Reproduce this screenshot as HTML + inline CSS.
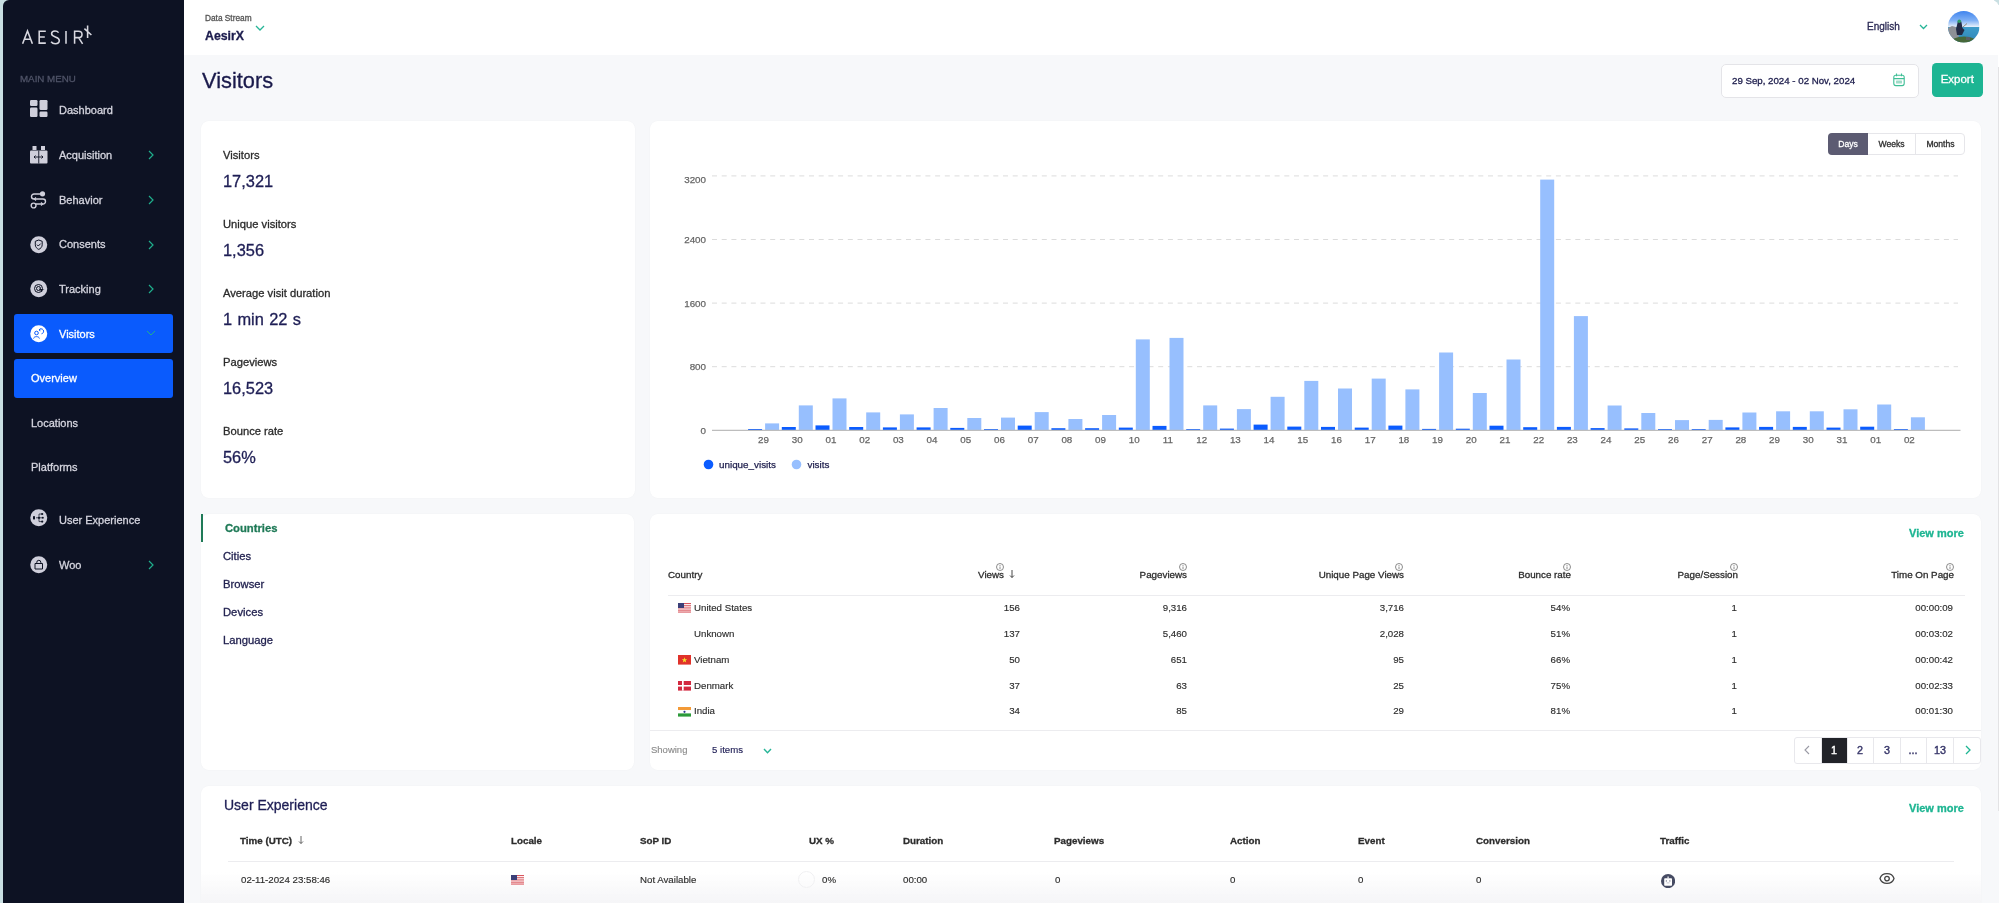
<!DOCTYPE html>
<html><head><meta charset="utf-8">
<style>
*{margin:0;padding:0;box-sizing:border-box}
html,body{width:1999px;height:903px;overflow:hidden;background:#c9dfe2;font-family:"Liberation Sans",sans-serif;}
.a{position:absolute;white-space:nowrap}
body>*{will-change:transform}
div.a,.nav,.lbl,.val,.th,.td,.tab,.uth,.utd,.pg{-webkit-text-stroke:0.3px currentColor}
.td,.utd{-webkit-text-stroke:0.15px currentColor}
svg text{stroke:#666;stroke-width:0.25px}
#side{position:absolute;left:3px;top:0;width:181px;height:903px;background:#0d1223;border-top-left-radius:6px}
#main{position:absolute;left:184px;top:0;width:1815px;height:903px;background:#f7f8fa}
#hdr{position:absolute;left:184px;top:0;width:1815px;height:55px;background:#fff}
.card{position:absolute;background:#fff;border-radius:8px;box-shadow:0 0 1.5px rgba(0,0,0,0.05)}
.nav{position:absolute;left:58.5px;font-size:11px;color:#d5d5df;line-height:14px}
.ico{position:absolute;left:30px;width:17.5px;height:17.5px;border-radius:50%;background:#cfcfdb}
.chev{position:absolute;left:148px;width:6px;height:10px}
.lbl{position:absolute;left:223px;font-size:11.2px;color:#2b2b2b;line-height:14px}
.val{position:absolute;left:223px;font-size:16.4px;word-spacing:0.8px;margin-top:0.3px;color:#1e1e55;line-height:20px}
.yl{font-size:9.8px;fill:#666}
.xl{font-size:9.8px;fill:#666}
.th{position:absolute;font-size:9.8px;color:#2d2d2d;line-height:12px}
.td{position:absolute;font-size:9.7px;color:#2d2d2d;line-height:12px}
.r{text-align:right}
.tab{position:absolute;left:223px;font-size:11.25px;color:#222250;line-height:14px}
.uth{position:absolute;font-size:9.8px;font-weight:bold;color:#2d2d2d;line-height:12px}
.utd{position:absolute;font-size:9.7px;color:#2d2d2d;line-height:12px}
.pg{position:absolute;top:737px;height:26.5px;width:26px;border:1px solid #e6e6ea;background:#fff;font-size:11px;color:#2b2a6e;text-align:center;line-height:25px}
</style></head>
<body>
<div id="side"></div>
<div id="main"></div>
<div id="hdr"></div>

<!-- logo -->
<svg class="a" style="left:0;top:0" width="100" height="50" viewBox="0 0 100 50"><g stroke="#d8d8e0" stroke-width="1.55" fill="none" stroke-linecap="butt">
<path d="M22.6 43.8 L27.5 31 L32.4 43.8 M24.3 39.3 H30.7"/>
<path d="M45.8 31.2 H39.2 V43.1 H45.8 M39.2 37 H44.8"/>
<path d="M58.6 32.6 C57.6 31.3 56.3 30.9 55 30.9 C53 30.9 51.6 32 51.6 33.8 C51.6 37.6 59.3 36.3 59.3 40.5 C59.3 42.6 57.5 43.7 55.3 43.7 C53.5 43.7 52 43 51.1 41.7"/>
<path d="M66 30.9 V43.8"/>
<path d="M74.6 43.8 V31.2 H78.4 C80.6 31.2 82 32.4 82 34.4 C82 36.4 80.6 37.6 78.4 37.6 H74.6 M78.6 37.6 L82.6 43.8"/>
<path d="M87.6 25.6 V38 M84.4 28.6 L91.4 35"/>
</g></svg>
<div class="a" style="left:19.5px;top:72.5px;font-size:9.75px;color:#4f5367;line-height:12px">MAIN MENU</div>

<!-- Dashboard -->
<svg class="a" style="left:30px;top:100px" width="18" height="17" viewBox="0 0 18 17"><rect x="0" y="0" width="7.5" height="6" rx="1.2" fill="#cfcfdb"/><rect x="0" y="7.5" width="7.5" height="9.5" rx="1.2" fill="#cfcfdb"/><rect x="9.5" y="0" width="8" height="10" rx="1.2" fill="#cfcfdb"/><rect x="9.5" y="11.5" width="8" height="5.5" rx="1.2" fill="#cfcfdb"/></svg>
<div class="nav" style="top:102.5px">Dashboard</div>

<!-- Acquisition -->
<svg class="a" style="left:30px;top:146px" width="18" height="18" viewBox="0 0 18 18"><rect x="2.5" y="0" width="4" height="4" fill="#cfcfdb"/><rect x="11" y="0" width="4" height="4" fill="#cfcfdb"/><rect x="0" y="4.5" width="17.5" height="13" rx="1" fill="#cfcfdb"/><path d="M4 11 h9 M5.5 9.5 l-1.5 1.5 l1.5 1.5 M11.5 9.5 l1.5 1.5 l-1.5 1.5 M8.75 4.5 v13" stroke="#0d1223" stroke-width="0.9" fill="none"/></svg>
<div class="nav" style="top:147.5px">Acquisition</div>
<svg class="chev" style="top:150px" viewBox="0 0 6 10"><path d="M1 1 L5 5 L1 9" stroke="#1fae8c" stroke-width="1.2" fill="none"/></svg>

<!-- Behavior -->
<svg class="a" style="left:30px;top:191px" width="18" height="18" viewBox="0 0 18 18"><circle cx="12.5" cy="2.8" r="2.6" fill="#cfcfdb"/><path d="M10 3 H4 a2.5 2.5 0 0 0 0 5 H13 a2.5 2.5 0 0 1 0 5 H6" stroke="#cfcfdb" stroke-width="1.4" fill="none"/><circle cx="3.6" cy="14.5" r="2.4" stroke="#cfcfdb" stroke-width="1.4" fill="none"/><path d="M6 6.5 l-1.6 1.5 l1.6 1.5 M11 11.5 l1.6 1.5 l-1.6 1.5" stroke="#cfcfdb" stroke-width="1.1" fill="none"/></svg>
<div class="nav" style="top:192.5px">Behavior</div>
<svg class="chev" style="top:195px" viewBox="0 0 6 10"><path d="M1 1 L5 5 L1 9" stroke="#1fae8c" stroke-width="1.2" fill="none"/></svg>

<!-- Consents -->
<svg class="a" style="left:30px;top:235.5px" width="18" height="18" viewBox="0 0 18 18"><circle cx="8.75" cy="8.75" r="8.5" fill="#cfcfdb"/><path d="M8.75 4 L12.2 5.3 V8.8 C12.2 11 10.6 12.6 8.75 13.4 C6.9 12.6 5.3 11 5.3 8.8 V5.3 Z" stroke="#0d1223" stroke-width="1" fill="none"/><path d="M7 8.7 l1.3 1.3 l2.4 -2.4" stroke="#0d1223" stroke-width="1" fill="none"/></svg>
<div class="nav" style="top:237px">Consents</div>
<svg class="chev" style="top:239.5px" viewBox="0 0 6 10"><path d="M1 1 L5 5 L1 9" stroke="#1fae8c" stroke-width="1.2" fill="none"/></svg>

<!-- Tracking -->
<svg class="a" style="left:30px;top:280px" width="18" height="18" viewBox="0 0 18 18"><circle cx="8.75" cy="8.75" r="8.5" fill="#cfcfdb"/><circle cx="8.5" cy="8.5" r="4" stroke="#0d1223" stroke-width="1" fill="none"/><circle cx="8.5" cy="8.5" r="2" stroke="#0d1223" stroke-width="1" fill="none"/><path d="M8.5 8.5 l3.5 3.5 l0.5 -2 l2 -0.5 z" fill="#0d1223"/></svg>
<div class="nav" style="top:281.5px">Tracking</div>
<svg class="chev" style="top:284px" viewBox="0 0 6 10"><path d="M1 1 L5 5 L1 9" stroke="#1fae8c" stroke-width="1.2" fill="none"/></svg>

<!-- Visitors active -->
<div class="a" style="left:14px;top:314px;width:159px;height:39px;background:#0a5bfd;border-radius:3px"></div>
<svg class="a" style="left:30px;top:324.5px" width="18" height="18" viewBox="0 0 18 18"><circle cx="8.75" cy="8.75" r="8.5" fill="#ffffff"/><circle cx="6.5" cy="8" r="1.8" stroke="#0a5bfd" stroke-width="1" fill="none"/><path d="M3.6 13.5 C3.8 11 9.2 11 9.4 13.5" stroke="#0a5bfd" stroke-width="1" fill="none"/><path d="M9 5 a2.5 2.5 0 1 1 2.5 3.8 M10.2 3.8 l-1.2 1.2 l1.4 0.8" stroke="#0a5bfd" stroke-width="1" fill="none"/></svg>
<div class="nav" style="top:326.5px;color:#fff">Visitors</div>
<svg class="a" style="left:146px;top:330px" width="10" height="6" viewBox="0 0 10 6"><path d="M1 1 L5 5 L9 1" stroke="#1fae8c" stroke-width="1" fill="none"/></svg>

<div class="a" style="left:14px;top:359px;width:159px;height:39px;background:#0a5bfd;border-radius:3px"></div>
<div class="nav" style="left:30.5px;top:371px;color:#fff">Overview</div>
<div class="nav" style="left:30.5px;top:415.5px">Locations</div>
<div class="nav" style="left:30.5px;top:460px">Platforms</div>

<!-- User Experience -->
<svg class="a" style="left:30px;top:509px" width="18" height="18" viewBox="0 0 18 18"><circle cx="8.75" cy="8.75" r="8.5" fill="#cfcfdb"/><rect x="3" y="7.2" width="2" height="3.2" fill="#0d1223"/><circle cx="9" cy="8.8" r="1.1" fill="#0d1223"/><circle cx="12.2" cy="5" r="1.1" fill="#0d1223"/><circle cx="12.2" cy="12.6" r="1.1" fill="#0d1223"/><circle cx="12.8" cy="8.8" r="1" fill="#0d1223"/><path d="M6 8.8 h6 M9 5 h3 M9 5 v7.6 h3" stroke="#0d1223" stroke-width="0.7" fill="none"/></svg>
<div class="nav" style="top:512.5px">User Experience</div>

<!-- Woo -->
<svg class="a" style="left:30px;top:555.5px" width="18" height="18" viewBox="0 0 18 18"><circle cx="8.75" cy="8.75" r="8.5" fill="#cfcfdb"/><path d="M5 7.5 h7.5 v5.5 h-7.5 z" stroke="#0d1223" stroke-width="1" fill="none"/><path d="M6.8 7.5 v-1.2 a2 2 0 0 1 4 0 v1.2" stroke="#0d1223" stroke-width="1" fill="none"/></svg>
<div class="nav" style="top:557.5px">Woo</div>
<svg class="chev" style="top:559.5px" viewBox="0 0 6 10"><path d="M1 1 L5 5 L1 9" stroke="#1fae8c" stroke-width="1.2" fill="none"/></svg>

<!-- header -->
<div class="a" style="left:1994px;top:0;width:5px;height:5px;background:#c9dfe2"></div><div class="a" style="left:1989px;top:0;width:10px;height:10px;background:#fff;border-top-right-radius:8px;z-index:1"></div>
<div class="a" style="left:204.5px;top:12.5px;font-size:8.3px;color:#555;line-height:10px">Data Stream</div>
<div class="a" style="left:204.5px;top:29px;font-size:12.3px;font-weight:bold;color:#1c1c4e;line-height:14px">AesirX</div>
<svg class="a" style="left:255px;top:25px" width="10" height="7" viewBox="0 0 10 7"><path d="M1 1 L5 5 L9 1" stroke="#26b597" stroke-width="1.3" fill="none"/></svg>

<div class="a" style="left:1866.5px;top:21px;font-size:10px;color:#2b2a55;line-height:12px">English</div>
<svg class="a" style="left:1919px;top:23.5px" width="9" height="6" viewBox="0 0 9 6"><path d="M1 1 L4.5 4.5 L8 1" stroke="#26b597" stroke-width="1.3" fill="none"/></svg>
<svg class="a" style="left:1948px;top:11px" width="31.5" height="31.5" viewBox="0 0 31.5 31.5"><defs><clipPath id="av"><circle cx="15.75" cy="15.75" r="15.75"/></clipPath><linearGradient id="sky" x1="0" y1="0" x2="0" y2="1"><stop offset="0" stop-color="#3f84ee"/><stop offset="0.3" stop-color="#7fb0f5"/><stop offset="0.5" stop-color="#e6f0fb"/><stop offset="0.52" stop-color="#3d9bc9"/><stop offset="1" stop-color="#2f86b8"/></linearGradient></defs>
<g clip-path="url(#av)"><rect width="31.5" height="31.5" fill="url(#sky)"/>
<path d="M0 17 L4 15 L8 16 L10 21 L11 27 L6 31.5 L0 31.5 Z" fill="#8d9096"/>
<ellipse cx="16" cy="32" rx="14" ry="6.5" fill="#46683a"/>
<path d="M9.5 12 C9.5 9.5 13 9 13.5 11.5 L14.5 17 L16.5 19 L14 24 L9 24 L8 18 Z" fill="#232a45"/>
<circle cx="11.3" cy="10.2" r="1.8" fill="#2f9e6a"/>
<path d="M15 16 L19 12.5" stroke="#8a8070" stroke-width="0.9"/>
<rect x="18" y="26" width="4" height="3" fill="#5a5f66"/>
</g></svg>

<div class="a" style="left:201.5px;top:67.5px;font-size:21.8px;color:#1a1a4b;line-height:26px">Visitors</div>

<div class="a" style="left:1720.5px;top:63.5px;width:198px;height:33.5px;background:#fff;border:1px solid #e4e4e8;border-radius:5px"></div>
<div class="a" style="left:1731.5px;top:74.5px;font-size:9.7px;color:#222250;line-height:12px">29 Sep, 2024 - 02 Nov, 2024</div>
<svg class="a" style="left:1893px;top:72.5px" width="12" height="14" viewBox="0 0 12 14"><rect x="0.8" y="2.2" width="10.4" height="10.4" rx="2" stroke="#3fbf96" stroke-width="1.1" fill="none"/><path d="M0.8 5.6 h10.4 M3.5 0.6 v2.6 M8.5 0.6 v2.6" stroke="#3fbf96" stroke-width="1.1"/><rect x="3" y="7.5" width="6" height="3" rx="0.5" fill="#9fdcc8"/></svg>
<div class="a" style="left:1931.5px;top:63px;width:50.5px;height:33.8px;background:#1db593;border-radius:4.5px;color:#fff;font-size:11.5px;text-align:center;line-height:33.5px">Export</div>

<!-- stats card -->
<div class="card" style="left:201px;top:121px;width:434px;height:377px"></div>
<div class="lbl" style="top:148px">Visitors</div>
<div class="val" style="top:170.5px">17,321</div>
<div class="lbl" style="top:217px">Unique visitors</div>
<div class="val" style="top:239.5px">1,356</div>
<div class="lbl" style="top:286px">Average visit duration</div>
<div class="val" style="top:308.5px">1 min 22 s</div>
<div class="lbl" style="top:355px">Pageviews</div>
<div class="val" style="top:377.5px">16,523</div>
<div class="lbl" style="top:424px">Bounce rate</div>
<div class="val" style="top:446.5px">56%</div>

<!-- chart card -->
<div class="card" style="left:650px;top:121px;width:1331px;height:377px"></div>
<div class="a" style="left:1828px;top:133px;width:136.5px;height:22px;border:1px solid #e6e6ea;border-radius:4px;background:#fff"></div>
<div class="a" style="left:1828px;top:133px;width:40px;height:22px;background:#5c5b72;border-radius:4px 0 0 4px;color:#fff;font-size:8.6px;text-align:center;line-height:22px">Days</div>
<div class="a" style="left:1915px;top:133px;width:1px;height:22px;background:#e6e6ea"></div>
<div class="a" style="left:1868px;top:133px;width:47px;height:22px;color:#2d2d2d;font-size:8.6px;text-align:center;line-height:22px">Weeks</div>
<div class="a" style="left:1915.5px;top:133px;width:49px;height:22px;color:#2d2d2d;font-size:8.6px;text-align:center;line-height:22px">Months</div>

<svg class="a" style="left:0;top:0" width="1999" height="903" viewBox="0 0 1999 903">
<line x1="712" y1="175.9" x2="1958" y2="175.9" stroke="#dcdcdc" stroke-width="1" stroke-dasharray="5 4.7"/>
<line x1="712" y1="239.5" x2="1958" y2="239.5" stroke="#dcdcdc" stroke-width="1" stroke-dasharray="5 4.7"/>
<line x1="712" y1="303.1" x2="1958" y2="303.1" stroke="#dcdcdc" stroke-width="1" stroke-dasharray="5 4.7"/>
<line x1="712" y1="366.7" x2="1958" y2="366.7" stroke="#dcdcdc" stroke-width="1" stroke-dasharray="5 4.7"/>
<text x="706" y="183.0" text-anchor="end" class="yl">3200</text>
<text x="706" y="243.1" text-anchor="end" class="yl">2400</text>
<text x="706" y="306.7" text-anchor="end" class="yl">1600</text>
<text x="706" y="370.3" text-anchor="end" class="yl">800</text>
<text x="706" y="434.1" text-anchor="end" class="yl">0</text>
<rect x="748.10" y="429.00" width="14" height="1.4" fill="#0b5cff"/>
<rect x="765.10" y="423.40" width="14" height="7" fill="#97bffe"/>
<text x="763.55" y="443.2" text-anchor="middle" class="xl">29</text>
<rect x="781.80" y="427.00" width="14" height="3.4" fill="#0b5cff"/>
<rect x="798.80" y="405.40" width="14" height="25" fill="#97bffe"/>
<text x="797.25" y="443.2" text-anchor="middle" class="xl">30</text>
<rect x="815.50" y="425.40" width="14" height="5" fill="#0b5cff"/>
<rect x="832.50" y="398.40" width="14" height="32" fill="#97bffe"/>
<text x="830.95" y="443.2" text-anchor="middle" class="xl">01</text>
<rect x="849.20" y="427.00" width="14" height="3.4" fill="#0b5cff"/>
<rect x="866.20" y="412.40" width="14" height="18" fill="#97bffe"/>
<text x="864.65" y="443.2" text-anchor="middle" class="xl">02</text>
<rect x="882.90" y="427.40" width="14" height="3" fill="#0b5cff"/>
<rect x="899.90" y="414.40" width="14" height="16" fill="#97bffe"/>
<text x="898.35" y="443.2" text-anchor="middle" class="xl">03</text>
<rect x="916.60" y="427.40" width="14" height="3" fill="#0b5cff"/>
<rect x="933.60" y="408.00" width="14" height="22.4" fill="#97bffe"/>
<text x="932.05" y="443.2" text-anchor="middle" class="xl">04</text>
<rect x="950.30" y="427.90" width="14" height="2.5" fill="#0b5cff"/>
<rect x="967.30" y="418.00" width="14" height="12.4" fill="#97bffe"/>
<text x="965.75" y="443.2" text-anchor="middle" class="xl">05</text>
<rect x="984.00" y="429.10" width="14" height="1.3" fill="#0b5cff"/>
<rect x="1001.00" y="417.60" width="14" height="12.8" fill="#97bffe"/>
<text x="999.45" y="443.2" text-anchor="middle" class="xl">06</text>
<rect x="1017.70" y="425.60" width="14" height="4.8" fill="#0b5cff"/>
<rect x="1034.70" y="412.10" width="14" height="18.3" fill="#97bffe"/>
<text x="1033.15" y="443.2" text-anchor="middle" class="xl">07</text>
<rect x="1051.40" y="428.20" width="14" height="2.2" fill="#0b5cff"/>
<rect x="1068.40" y="419.00" width="14" height="11.4" fill="#97bffe"/>
<text x="1066.85" y="443.2" text-anchor="middle" class="xl">08</text>
<rect x="1085.10" y="428.20" width="14" height="2.2" fill="#0b5cff"/>
<rect x="1102.10" y="415.00" width="14" height="15.4" fill="#97bffe"/>
<text x="1100.55" y="443.2" text-anchor="middle" class="xl">09</text>
<rect x="1118.80" y="427.60" width="14" height="2.8" fill="#0b5cff"/>
<rect x="1135.80" y="339.40" width="14" height="91" fill="#97bffe"/>
<text x="1134.25" y="443.2" text-anchor="middle" class="xl">10</text>
<rect x="1152.50" y="425.90" width="14" height="4.5" fill="#0b5cff"/>
<rect x="1169.50" y="337.90" width="14" height="92.5" fill="#97bffe"/>
<text x="1167.95" y="443.2" text-anchor="middle" class="xl">11</text>
<rect x="1186.20" y="429.10" width="14" height="1.3" fill="#0b5cff"/>
<rect x="1203.20" y="405.40" width="14" height="25" fill="#97bffe"/>
<text x="1201.65" y="443.2" text-anchor="middle" class="xl">12</text>
<rect x="1219.90" y="428.60" width="14" height="1.8" fill="#0b5cff"/>
<rect x="1236.90" y="409.10" width="14" height="21.3" fill="#97bffe"/>
<text x="1235.35" y="443.2" text-anchor="middle" class="xl">13</text>
<rect x="1253.60" y="424.60" width="14" height="5.8" fill="#0b5cff"/>
<rect x="1270.60" y="396.80" width="14" height="33.6" fill="#97bffe"/>
<text x="1269.05" y="443.2" text-anchor="middle" class="xl">14</text>
<rect x="1287.30" y="426.60" width="14" height="3.8" fill="#0b5cff"/>
<rect x="1304.30" y="380.90" width="14" height="49.5" fill="#97bffe"/>
<text x="1302.75" y="443.2" text-anchor="middle" class="xl">15</text>
<rect x="1321.00" y="426.90" width="14" height="3.5" fill="#0b5cff"/>
<rect x="1338.00" y="388.50" width="14" height="41.9" fill="#97bffe"/>
<text x="1336.45" y="443.2" text-anchor="middle" class="xl">16</text>
<rect x="1354.70" y="427.60" width="14" height="2.8" fill="#0b5cff"/>
<rect x="1371.70" y="378.60" width="14" height="51.8" fill="#97bffe"/>
<text x="1370.15" y="443.2" text-anchor="middle" class="xl">17</text>
<rect x="1388.40" y="425.60" width="14" height="4.8" fill="#0b5cff"/>
<rect x="1405.40" y="389.40" width="14" height="41" fill="#97bffe"/>
<text x="1403.85" y="443.2" text-anchor="middle" class="xl">18</text>
<rect x="1422.10" y="428.90" width="14" height="1.5" fill="#0b5cff"/>
<rect x="1439.10" y="352.50" width="14" height="77.9" fill="#97bffe"/>
<text x="1437.55" y="443.2" text-anchor="middle" class="xl">19</text>
<rect x="1455.80" y="428.70" width="14" height="1.7" fill="#0b5cff"/>
<rect x="1472.80" y="393.00" width="14" height="37.4" fill="#97bffe"/>
<text x="1471.25" y="443.2" text-anchor="middle" class="xl">20</text>
<rect x="1489.50" y="425.70" width="14" height="4.7" fill="#0b5cff"/>
<rect x="1506.50" y="359.50" width="14" height="70.9" fill="#97bffe"/>
<text x="1504.95" y="443.2" text-anchor="middle" class="xl">21</text>
<rect x="1523.20" y="427.20" width="14" height="3.2" fill="#0b5cff"/>
<rect x="1540.20" y="179.60" width="14" height="250.8" fill="#97bffe"/>
<text x="1538.65" y="443.2" text-anchor="middle" class="xl">22</text>
<rect x="1556.90" y="426.90" width="14" height="3.5" fill="#0b5cff"/>
<rect x="1573.90" y="316.10" width="14" height="114.3" fill="#97bffe"/>
<text x="1572.35" y="443.2" text-anchor="middle" class="xl">23</text>
<rect x="1590.60" y="428.10" width="14" height="2.3" fill="#0b5cff"/>
<rect x="1607.60" y="405.50" width="14" height="24.9" fill="#97bffe"/>
<text x="1606.05" y="443.2" text-anchor="middle" class="xl">24</text>
<rect x="1624.30" y="428.40" width="14" height="2" fill="#0b5cff"/>
<rect x="1641.30" y="413.00" width="14" height="17.4" fill="#97bffe"/>
<text x="1639.75" y="443.2" text-anchor="middle" class="xl">25</text>
<rect x="1658.00" y="429.10" width="14" height="1.3" fill="#0b5cff"/>
<rect x="1675.00" y="420.10" width="14" height="10.3" fill="#97bffe"/>
<text x="1673.45" y="443.2" text-anchor="middle" class="xl">26</text>
<rect x="1691.70" y="429.10" width="14" height="1.3" fill="#0b5cff"/>
<rect x="1708.70" y="419.90" width="14" height="10.5" fill="#97bffe"/>
<text x="1707.15" y="443.2" text-anchor="middle" class="xl">27</text>
<rect x="1725.40" y="427.40" width="14" height="3" fill="#0b5cff"/>
<rect x="1742.40" y="412.50" width="14" height="17.9" fill="#97bffe"/>
<text x="1740.85" y="443.2" text-anchor="middle" class="xl">28</text>
<rect x="1759.10" y="426.90" width="14" height="3.5" fill="#0b5cff"/>
<rect x="1776.10" y="411.30" width="14" height="19.1" fill="#97bffe"/>
<text x="1774.55" y="443.2" text-anchor="middle" class="xl">29</text>
<rect x="1792.80" y="426.90" width="14" height="3.5" fill="#0b5cff"/>
<rect x="1809.80" y="411.30" width="14" height="19.1" fill="#97bffe"/>
<text x="1808.25" y="443.2" text-anchor="middle" class="xl">30</text>
<rect x="1826.50" y="427.60" width="14" height="2.8" fill="#0b5cff"/>
<rect x="1843.50" y="409.30" width="14" height="21.1" fill="#97bffe"/>
<text x="1841.95" y="443.2" text-anchor="middle" class="xl">31</text>
<rect x="1860.20" y="426.70" width="14" height="3.7" fill="#0b5cff"/>
<rect x="1877.20" y="404.50" width="14" height="25.9" fill="#97bffe"/>
<text x="1875.65" y="443.2" text-anchor="middle" class="xl">01</text>
<rect x="1893.90" y="429.10" width="14" height="1.3" fill="#0b5cff"/>
<rect x="1910.90" y="417.30" width="14" height="13.1" fill="#97bffe"/>
<text x="1909.35" y="443.2" text-anchor="middle" class="xl">02</text>
<line x1="712" y1="430.4" x2="1960.5" y2="430.4" stroke="#bdbdbd" stroke-width="1.3"/>
<circle cx="708.5" cy="464.5" r="4.8" fill="#0b5cff"/>
<text x="719" y="467.8" class="lg">unique_visits</text>
<circle cx="796.5" cy="464.5" r="4.8" fill="#97bffe"/>
<text x="807.5" y="467.8" class="lg">visits</text>
</svg>
<style>.lg{font-size:9.85px;fill:#222250;stroke:#222250 !important}</style>

<!-- tabs card -->
<div class="card" style="left:201px;top:514px;width:432.5px;height:255.5px"></div>
<div class="a" style="left:201px;top:514px;width:1.6px;height:28px;background:#1f7a57"></div>
<div class="tab" style="left:224.5px;top:520.5px;color:#1f7a57;font-weight:bold">Countries</div>
<div class="tab" style="top:548.5px">Cities</div>
<div class="tab" style="top:576.5px">Browser</div>
<div class="tab" style="top:604.5px">Devices</div>
<div class="tab" style="top:632.5px">Language</div>

<!-- table card -->
<div class="card" style="left:650px;top:514px;width:1331px;height:255.5px"></div>
<div class="a" style="left:1909px;top:527px;font-size:11px;font-weight:bold;color:#1eb592;line-height:13px">View more</div>
<div class="th" style="left:667.5px;top:568.8px;">Country</div>
<div class="th r" style="left:803.5px;width:200px;top:568.8px;">Views</div>
<svg class="a" style="left:995.6px;top:562.5px" width="8" height="8" viewBox="0 0 8 8"><circle cx="4" cy="4" r="3.5" stroke="#666" stroke-width="0.75" fill="none"/><path d="M4 3.5 v2.5 M4 2 v0.9" stroke="#666" stroke-width="0.75"/></svg>
<svg class="a" style="left:1009px;top:569.3px" width="6" height="10" viewBox="0 0 6 10"><path d="M3 1 v7.5 M1 6.5 l2 2 l2 -2" stroke="#333" stroke-width="0.9" fill="none"/></svg>
<div class="th r" style="left:987.2px;width:200px;top:568.8px;">Pageviews</div>
<svg class="a" style="left:1179.0px;top:562.5px" width="8" height="8" viewBox="0 0 8 8"><circle cx="4" cy="4" r="3.5" stroke="#666" stroke-width="0.75" fill="none"/><path d="M4 3.5 v2.5 M4 2 v0.9" stroke="#666" stroke-width="0.75"/></svg>
<div class="th r" style="left:1204px;width:200px;top:568.8px;">Unique Page Views</div>
<svg class="a" style="left:1395.4px;top:562.5px" width="8" height="8" viewBox="0 0 8 8"><circle cx="4" cy="4" r="3.5" stroke="#666" stroke-width="0.75" fill="none"/><path d="M4 3.5 v2.5 M4 2 v0.9" stroke="#666" stroke-width="0.75"/></svg>
<div class="th r" style="left:1371px;width:200px;top:568.8px;">Bounce rate</div>
<svg class="a" style="left:1563.0px;top:562.5px" width="8" height="8" viewBox="0 0 8 8"><circle cx="4" cy="4" r="3.5" stroke="#666" stroke-width="0.75" fill="none"/><path d="M4 3.5 v2.5 M4 2 v0.9" stroke="#666" stroke-width="0.75"/></svg>
<div class="th r" style="left:1538px;width:200px;top:568.8px;">Page/Session</div>
<svg class="a" style="left:1729.7px;top:562.5px" width="8" height="8" viewBox="0 0 8 8"><circle cx="4" cy="4" r="3.5" stroke="#666" stroke-width="0.75" fill="none"/><path d="M4 3.5 v2.5 M4 2 v0.9" stroke="#666" stroke-width="0.75"/></svg>
<div class="th r" style="left:1754px;width:200px;top:568.8px;">Time On Page</div>
<svg class="a" style="left:1945.9px;top:562.5px" width="8" height="8" viewBox="0 0 8 8"><circle cx="4" cy="4" r="3.5" stroke="#666" stroke-width="0.75" fill="none"/><path d="M4 3.5 v2.5 M4 2 v0.9" stroke="#666" stroke-width="0.75"/></svg>
<div class="a" style="left:667.5px;top:594.5px;width:1297px;height:1px;background:#ececef"></div>
<svg class="a" style="left:678px;top:603.3px" width="13" height="9.6" viewBox="0 0 13 9.6"><rect width="13" height="9.6" fill="#fff"/><g fill="#d9565e"><rect y="0" width="13" height="1.1"/><rect y="2.2" width="13" height="1.1"/><rect y="4.4" width="13" height="1.1"/><rect y="6.6" width="13" height="1.1"/><rect y="8.5" width="13" height="1.1"/></g><rect width="6" height="5" fill="#3b3f78"/></svg>
<div class="td" style="left:694.4px;top:602.1px;">United States</div>
<div class="td r" style="left:819.5px;width:200px;top:602.1px;">156</div>
<div class="td r" style="left:986.8px;width:200px;top:602.1px;">9,316</div>
<div class="td r" style="left:1203.5px;width:200px;top:602.1px;">3,716</div>
<div class="td r" style="left:1369.5px;width:200px;top:602.1px;">54%</div>
<div class="td r" style="left:1536.6px;width:200px;top:602.1px;">1</div>
<div class="td r" style="left:1753px;width:200px;top:602.1px;">00:00:09</div>
<div class="td" style="left:694.4px;top:627.9px;">Unknown</div>
<div class="td r" style="left:819.5px;width:200px;top:627.9px;">137</div>
<div class="td r" style="left:986.8px;width:200px;top:627.9px;">5,460</div>
<div class="td r" style="left:1203.5px;width:200px;top:627.9px;">2,028</div>
<div class="td r" style="left:1369.5px;width:200px;top:627.9px;">51%</div>
<div class="td r" style="left:1536.6px;width:200px;top:627.9px;">1</div>
<div class="td r" style="left:1753px;width:200px;top:627.9px;">00:03:02</div>
<svg class="a" style="left:678px;top:654.9px" width="13" height="9.6" viewBox="0 0 13 9.6"><rect width="13" height="9.6" fill="#e0322a"/><path d="M6.5 2.3 l0.7 2 h2 l-1.6 1.2 l0.6 2 l-1.7 -1.2 l-1.7 1.2 l0.6 -2 l-1.6 -1.2 h2z" fill="#f5e12e"/></svg>
<div class="td" style="left:694.4px;top:653.7px;">Vietnam</div>
<div class="td r" style="left:819.5px;width:200px;top:653.7px;">50</div>
<div class="td r" style="left:986.8px;width:200px;top:653.7px;">651</div>
<div class="td r" style="left:1203.5px;width:200px;top:653.7px;">95</div>
<div class="td r" style="left:1369.5px;width:200px;top:653.7px;">66%</div>
<div class="td r" style="left:1536.6px;width:200px;top:653.7px;">1</div>
<div class="td r" style="left:1753px;width:200px;top:653.7px;">00:00:42</div>
<svg class="a" style="left:678px;top:680.7px" width="13" height="9.6" viewBox="0 0 13 9.6"><rect width="13" height="9.6" fill="#d3283f"/><rect x="4" width="1.7" height="9.6" fill="#fff"/><rect y="4" width="13" height="1.6" fill="#fff"/></svg>
<div class="td" style="left:694.4px;top:679.5px;">Denmark</div>
<div class="td r" style="left:819.5px;width:200px;top:679.5px;">37</div>
<div class="td r" style="left:986.8px;width:200px;top:679.5px;">63</div>
<div class="td r" style="left:1203.5px;width:200px;top:679.5px;">25</div>
<div class="td r" style="left:1369.5px;width:200px;top:679.5px;">75%</div>
<div class="td r" style="left:1536.6px;width:200px;top:679.5px;">1</div>
<div class="td r" style="left:1753px;width:200px;top:679.5px;">00:02:33</div>
<svg class="a" style="left:678px;top:706.5px" width="13" height="9.6" viewBox="0 0 13 9.6"><rect width="13" height="3.2" fill="#f39a37"/><rect y="3.2" width="13" height="3.2" fill="#fff"/><rect y="6.4" width="13" height="3.2" fill="#2c9a3a"/><circle cx="6.5" cy="4.8" r="1.1" fill="#2b3a8f"/></svg>
<div class="td" style="left:694.4px;top:705.3px;">India</div>
<div class="td r" style="left:819.5px;width:200px;top:705.3px;">34</div>
<div class="td r" style="left:986.8px;width:200px;top:705.3px;">85</div>
<div class="td r" style="left:1203.5px;width:200px;top:705.3px;">29</div>
<div class="td r" style="left:1369.5px;width:200px;top:705.3px;">81%</div>
<div class="td r" style="left:1536.6px;width:200px;top:705.3px;">1</div>
<div class="td r" style="left:1753px;width:200px;top:705.3px;">00:01:30</div>
<div class="a" style="left:650px;top:729.8px;width:1331px;height:1px;background:#ececef"></div>
<div class="td" style="left:650.8px;top:744.2px;color:#8d8d8d;font-size:9.5px">Showing</div>
<div class="td" style="left:712.4px;top:744.2px;color:#25245a;font-size:9.6px">5 items</div>
<svg class="a" style="left:763px;top:747.5px" width="9" height="6.5" viewBox="0 0 9 6.5"><path d="M1 1 L4.5 4.8 L8 1" stroke="#26b597" stroke-width="1.4" fill="none"/></svg>
<div class="a" style="left:1793.5px;top:736.6px;width:186.5px;height:27px;border:1px solid #e8e8ec;border-radius:3px;background:#fff"></div>
<div class="a" style="left:1820.5px;top:736.6px;width:1px;height:27px;background:#e8e8ec"></div>
<div class="a" style="left:1846.5px;top:736.6px;width:1px;height:27px;background:#e8e8ec"></div>
<div class="a" style="left:1873.0px;top:736.6px;width:1px;height:27px;background:#e8e8ec"></div>
<div class="a" style="left:1899.5px;top:736.6px;width:1px;height:27px;background:#e8e8ec"></div>
<div class="a" style="left:1926.0px;top:736.6px;width:1px;height:27px;background:#e8e8ec"></div>
<div class="a" style="left:1953.0px;top:736.6px;width:1px;height:27px;background:#e8e8ec"></div>
<div class="a" style="left:1821.8px;top:738px;width:25px;height:24.5px;background:#212329"></div>
<div class="a" style="left:1821.3px;top:744px;width:26px;text-align:center;font-size:10.8px;-webkit-text-stroke:0.4px #fff;line-height:13px;color:#fff">1</div>
<div class="a" style="left:1847px;top:744px;width:26px;text-align:center;font-size:10.8px;-webkit-text-stroke:0.4px #38376a;line-height:13px;color:#38376a">2</div>
<div class="a" style="left:1873.5px;top:744px;width:26px;text-align:center;font-size:10.8px;-webkit-text-stroke:0.4px #38376a;line-height:13px;color:#38376a">3</div>
<div class="a" style="left:1900px;top:744px;width:26px;text-align:center;font-size:10.8px;-webkit-text-stroke:0.4px #38376a;line-height:13px;color:#38376a">...</div>
<div class="a" style="left:1926.5px;top:744px;width:26px;text-align:center;font-size:10.8px;-webkit-text-stroke:0.4px #38376a;line-height:13px;color:#38376a">13</div>
<svg class="a" style="left:1804px;top:745px" width="6" height="10" viewBox="0 0 6 10"><path d="M5 1 L1 5 L5 9" stroke="#9a9aa5" stroke-width="1.1" fill="none"/></svg>
<svg class="a" style="left:1965px;top:745px" width="6" height="10" viewBox="0 0 6 10"><path d="M1 1 L5 5 L1 9" stroke="#1eb592" stroke-width="1.3" fill="none"/></svg>

<!-- UX card -->
<div class="card" style="left:201px;top:786px;width:1780px;height:140px"></div>
<div class="a" style="left:201px;top:872px;width:1780px;height:31px;background:linear-gradient(180deg,rgba(255,255,255,0) 0%,rgba(242,242,245,0.75) 100%)"></div>
<div class="a" style="left:223.5px;top:797px;font-size:14px;color:#1e1e55;line-height:16px">User Experience</div>
<div class="a" style="left:1909px;top:802px;font-size:11px;font-weight:bold;color:#1eb592;line-height:13px">View more</div>
<div class="uth" style="left:240.3px;top:834.5px;">Time (UTC)</div>
<div class="uth" style="left:510.7px;top:834.5px;">Locale</div>
<div class="uth" style="left:639.7px;top:834.5px;">SoP ID</div>
<div class="uth" style="left:809px;top:834.5px;">UX %</div>
<div class="uth" style="left:902.6px;top:834.5px;">Duration</div>
<div class="uth" style="left:1054.1px;top:834.5px;">Pageviews</div>
<div class="uth" style="left:1229.7px;top:834.5px;">Action</div>
<div class="uth" style="left:1357.7px;top:834.5px;">Event</div>
<div class="uth" style="left:1475.9px;top:834.5px;">Conversion</div>
<div class="uth" style="left:1660.1px;top:834.5px;">Traffic</div>
<svg class="a" style="left:297.5px;top:834.5px" width="6" height="10" viewBox="0 0 6 10"><path d="M3 1 v7.5 M1 6.5 l2 2 l2 -2" stroke="#555" stroke-width="0.9" fill="none"/></svg>
<div class="a" style="left:228.3px;top:860.5px;width:1725.5px;height:1px;background:#ececef"></div>
<div class="utd" style="left:240.5px;top:874.0px;">02-11-2024 23:58:46</div>
<div class="utd" style="left:640.3px;top:874.0px;">Not Available</div>
<div class="utd" style="left:821.5px;top:874.0px;">0%</div>
<div class="utd" style="left:903.2px;top:874.0px;">00:00</div>
<div class="utd" style="left:1054.5px;top:874.0px;">0</div>
<div class="utd" style="left:1229.9px;top:874.0px;">0</div>
<div class="utd" style="left:1357.7px;top:874.0px;">0</div>
<div class="utd" style="left:1476px;top:874.0px;">0</div>
<svg class="a" style="left:511px;top:875.2px" width="13" height="9.6" viewBox="0 0 13 9.6"><rect width="13" height="9.6" fill="#fff"/><g fill="#d9565e"><rect y="0" width="13" height="1.1"/><rect y="2.2" width="13" height="1.1"/><rect y="4.4" width="13" height="1.1"/><rect y="6.6" width="13" height="1.1"/><rect y="8.5" width="13" height="1.1"/></g><rect width="6" height="5" fill="#3b3f78"/></svg>
<div class="a" style="left:798px;top:871px;width:17px;height:17px;border-radius:50%;border:1px solid #f0f0f2"></div>
<svg class="a" style="left:1661px;top:873.5px" width="14.2" height="14.2" viewBox="0 0 14.2 14.2"><circle cx="7.1" cy="7.1" r="7.1" fill="#464b63"/><rect x="3.2" y="4.2" width="7.8" height="7.6" rx="0.8" fill="#fff"/><path d="M7.1 2.6 v1.8" stroke="#fff" stroke-width="1.2"/><circle cx="5.3" cy="6.9" r="0.55" fill="#464b63"/><circle cx="8.9" cy="6.9" r="0.55" fill="#464b63"/><path d="M5.6 8.9 h3" stroke="#9a9cab" stroke-width="0.6"/></svg>
<svg class="a" style="left:1878.6px;top:871.8px" width="16" height="13" viewBox="0 0 16 13"><path d="M1 6.5 C3 0 13 0 15 6.5 C13 13 3 13 1 6.5 Z" stroke="#444" stroke-width="1.3" fill="none"/><circle cx="8" cy="6.6" r="2.3" stroke="#444" stroke-width="1.3" fill="none"/></svg>

<div class="a" style="left:1998px;top:55px;width:1px;height:12px;background:#fff"></div><div class="a" style="left:1998px;top:67px;width:1px;height:744px;background:#e3e3e5"></div>
</body></html>
